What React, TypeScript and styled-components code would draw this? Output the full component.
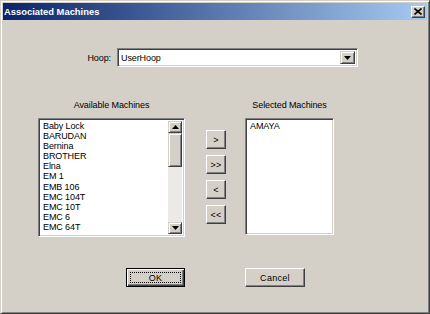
import React from "react";
import styled, { createGlobalStyle } from "styled-components";

const Global = createGlobalStyle`
  html, body { margin: 0; padding: 0; background: #D4D0C8; overflow: hidden; }
  * { box-sizing: border-box; }
`;

const FONT = `"Liberation Sans", Arial, sans-serif`;

const Window = styled.div`
  width: 430px;
  height: 314px;
  background: #d4d0c8;
  border: 1px solid;
  border-color: #d4d0c8 #404040 #404040 #d4d0c8;
  box-shadow: inset 1px 1px #ffffff, inset -1px -1px #808080;
  padding: 2px 2px 3px 2px;
  display: flex;
  flex-direction: column;
  font-family: ${FONT};
  font-size: 9px;
  letter-spacing: -0.1px;
  color: #000;
`;

const TitleBar = styled.div`
  height: 17px;
  display: flex;
  align-items: center;
  justify-content: space-between;
  padding: 0 2px 0 1px;
  background: linear-gradient(to right, #0a246a, #a6caf0);
`;

const Title = styled.span`
  color: #fff;
  font-weight: bold;
  font-size: 9.4px;
  letter-spacing: 0;
`;

const CloseButton = styled.div`
  width: 14px;
  height: 12px;
  background: #d4d0c8;
  border: 1px solid;
  border-color: #ffffff #404040 #404040 #ffffff;
  box-shadow: inset -1px -1px #808080;
  display: flex;
  align-items: center;
  justify-content: center;
`;

const Body = styled.div`
  display: flex;
  flex-direction: column;
`;

const HoopRow = styled.div`
  display: flex;
  align-items: center;
  margin-top: 28px;
  padding-left: 58px;
  gap: 6px;
`;

const Label = styled.label`
  width: 50px;
  text-align: right;
`;

const Combo = styled.div`
  width: 241px;
  height: 19px;
  background: #fff;
  border: 1px solid;
  border-color: #808080 #ffffff #ffffff #808080;
  box-shadow: inset 1px 1px #404040, inset -1px -1px #d4d0c8;
  display: flex;
  align-items: center;
  justify-content: space-between;
  padding: 2px 2px 2px 3px;
`;

const ComboArrow = styled.div`
  width: 15px;
  height: 13px;
  background: #d4d0c8;
  border: 1px solid;
  border-color: #d4d0c8 #404040 #404040 #d4d0c8;
  box-shadow: inset 1px 1px #ffffff, inset -1px -1px #808080;
  display: flex;
  align-items: center;
  justify-content: center;
`;

const ListsRow = styled.div`
  display: flex;
  margin-top: 32px;
  padding-left: 35px;
`;

const Column = styled.div<{ $w: number }>`
  width: ${(p) => p.$w}px;
  display: flex;
  flex-direction: column;
  align-items: center;
`;

const ColLabel = styled.div`
  height: 12px;
  line-height: 12px;
  margin-bottom: 7px;
  white-space: nowrap;
`;

const ListBox = styled.div<{ $h: number }>`
  width: 100%;
  height: ${(p) => p.$h}px;
  background: #fff;
  border: 1px solid;
  border-color: #808080 #ffffff #ffffff #808080;
  box-shadow: inset 1px 1px #404040, inset -1px -1px #d4d0c8;
  padding: 2px;
  display: flex;
  overflow: hidden;
`;

const Items = styled.div`
  flex: 1;
  padding-left: 2px;
  overflow: hidden;
`;

const Item = styled.div`
  height: 10.1px;
  line-height: 10.1px;
  white-space: nowrap;
`;

const ScrollBar = styled.div`
  width: 14px;
  display: flex;
  flex-direction: column;
  background: #eceae6;
`;

const ScrollBtn = styled.div<{ $h: number }>`
  width: 14px;
  height: ${(p) => p.$h}px;
  flex: none;
  background: #d4d0c8;
  border: 1px solid;
  border-color: #d4d0c8 #404040 #404040 #d4d0c8;
  box-shadow: inset 1px 1px #ffffff, inset -1px -1px #808080;
  display: flex;
  align-items: center;
  justify-content: center;
`;

const ScrollTrack = styled.div`
  flex: 1;
`;

const MoveButtons = styled.div`
  display: flex;
  flex-direction: column;
  gap: 6px;
  margin-left: 21px;
  margin-right: 19px;
  padding-top: 31px;
`;

const RaisedButton = styled.button<{ $w: number; $h: number }>`
  width: ${(p) => p.$w}px;
  height: ${(p) => p.$h}px;
  padding: 0;
  margin: 0;
  font-family: ${FONT};
  font-size: 9px;
  color: #000;
  background: #d4d0c8;
  border: 1px solid;
  border-color: #ffffff #404040 #404040 #ffffff;
  box-shadow: inset -1px -1px #808080, inset 1px 1px #d4d0c8;
  display: flex;
  align-items: center;
  justify-content: center;
  letter-spacing: 0.3px;
`;

const DefaultButton = styled(RaisedButton)`
  position: relative;
  border: 1px solid #000;
  box-shadow: inset 1px 1px #ffffff, inset -1px -1px #404040, inset -2px -2px #808080;
  &::after {
    content: "";
    position: absolute;
    inset: 3px;
    border: 1px dotted #000;
  }
`;

const Footer = styled.div`
  display: flex;
  margin-top: 31px;
  padding-left: 123px;
  gap: 60px;
`;

const available = [
  "Baby Lock",
  "BARUDAN",
  "Bernina",
  "BROTHER",
  "Elna",
  "EM 1",
  "EMB 106",
  "EMC 104T",
  "EMC 10T",
  "EMC 6",
  "EMC 64T",
];

const Tri = ({ dir }: { dir: "up" | "down" }) => (
  <svg width="7" height="4" viewBox="0 0 7 4">
    {dir === "up" ? (
      <polygon points="3.5,0 7,4 0,4" fill="#000" />
    ) : (
      <polygon points="0,0 7,0 3.5,4" fill="#000" />
    )}
  </svg>
);

export default function App() {
  return (
    <>
      <Global />
      <Window>
        <TitleBar>
          <Title>Associated Machines</Title>
          <CloseButton>
            <svg width="8" height="7" viewBox="0 0 8 7">
              <path d="M0.5 0.5 L7.5 6.5 M7.5 0.5 L0.5 6.5" stroke="#000" strokeWidth="1.6" />
            </svg>
          </CloseButton>
        </TitleBar>
        <Body>
          <HoopRow>
            <Label>Hoop:</Label>
            <Combo>
              <span>UserHoop</span>
              <ComboArrow>
                <Tri dir="down" />
              </ComboArrow>
            </Combo>
          </HoopRow>
          <ListsRow>
            <Column $w={147}>
              <ColLabel>Available Machines</ColLabel>
              <ListBox $h={119}>
                <Items>
                  {available.map((m) => (
                    <Item key={m}>{m}</Item>
                  ))}
                </Items>
                <ScrollBar>
                  <ScrollBtn $h={12}>
                    <Tri dir="up" />
                  </ScrollBtn>
                  <ScrollBtn $h={34} />
                  <ScrollTrack />
                  <ScrollBtn $h={12}>
                    <Tri dir="down" />
                  </ScrollBtn>
                </ScrollBar>
              </ListBox>
            </Column>
            <MoveButtons>
              <RaisedButton $w={20} $h={19}>&gt;</RaisedButton>
              <RaisedButton $w={20} $h={19}>&gt;&gt;</RaisedButton>
              <RaisedButton $w={20} $h={19}>&lt;</RaisedButton>
              <RaisedButton $w={20} $h={19}>&lt;&lt;</RaisedButton>
            </MoveButtons>
            <Column $w={89}>
              <ColLabel>Selected Machines</ColLabel>
              <ListBox $h={117}>
                <Items>
                  <Item>AMAYA</Item>
                </Items>
              </ListBox>
            </Column>
          </ListsRow>
          <Footer>
            <DefaultButton $w={59} $h={19}>OK</DefaultButton>
            <RaisedButton $w={60} $h={19}>Cancel</RaisedButton>
          </Footer>
        </Body>
      </Window>
    </>
  );
}
